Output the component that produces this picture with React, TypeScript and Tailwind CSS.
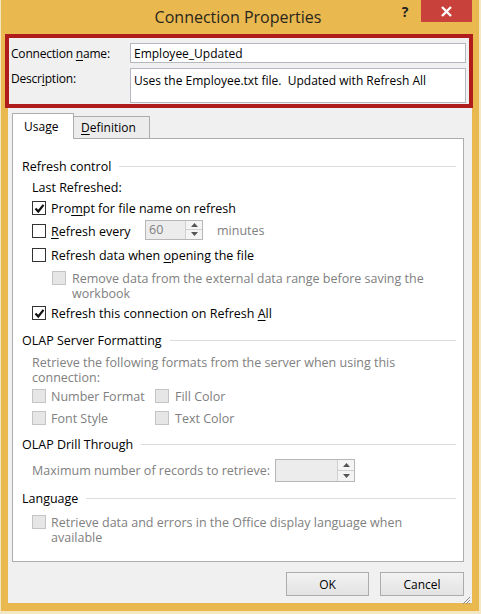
import React from "react";

const FONT = "font-['Open_Sans','Noto_Sans',sans-serif]";

function U({ children }: { children: React.ReactNode }) {
  return <span className="underline underline-offset-2">{children}</span>;
}

function Box({ checked, disabled }: { checked?: boolean; disabled?: boolean }) {
  return (
    <div
      className={`w-[14px] h-[14px] shrink-0 border flex items-center justify-center ${
        disabled ? "border-[#c4c4c4] bg-[#e6e6e6]" : "border-[#333333] bg-white"
      }`}
    >
      {checked && (
        <svg width="11" height="11" viewBox="0 0 11 11">
          <path d="M1.5 5.5 L4.3 8.5 L9.5 1.8" fill="none" stroke="#111" strokeWidth="2.2" />
        </svg>
      )}
    </div>
  );
}

function Heading({ label }: { label: string }) {
  return (
    <div className="flex items-center h-full">
      <span className="text-black whitespace-nowrap">{label}</span>
      <div className="flex-1 h-px bg-[#dcdcdc] ml-[8px]" />
    </div>
  );
}

// two wrapped lines, 15px apart like the dialog's wrapped labels
function Lines({ a, b }: { a: string; b: string }) {
  return (
    <div className="flex flex-col text-[#808080]">
      <div className="h-[15px] leading-[15px] whitespace-nowrap">{a}</div>
      <div className="h-[15px] leading-[15px] whitespace-nowrap">{b}</div>
    </div>
  );
}

function Spin({ w, value }: { w: string; value?: string }) {
  return (
    <div className={`${w} h-full flex border border-[#b7b7b7] bg-[#ececec]`}>
      <div className="flex-1 pl-[3px] flex items-center text-[#808080]">{value}</div>
      <div className="w-[17px] flex flex-col border-l border-[#d0d0d0] bg-[#f4f4f4]">
        <div className="flex-1 flex items-center justify-center border-b border-[#d0d0d0]">
          <svg width="7" height="4" viewBox="0 0 7 4">
            <path d="M0 4 L3.5 0 L7 4Z" fill="#555" />
          </svg>
        </div>
        <div className="flex-1 flex items-center justify-center">
          <svg width="7" height="4" viewBox="0 0 7 4">
            <path d="M0 0 L3.5 4 L7 0Z" fill="#555" />
          </svg>
        </div>
      </div>
    </div>
  );
}

export default function App() {
  return (
    <div className={`w-[481px] h-[614px] ${FONT} text-[12px] leading-[15px] text-black bg-[#f6e7c3]`}>
      <div className="w-[478px] h-[611px] ml-px bg-[#e9b84f] flex flex-col">
        {/* Title bar */}
        <div className="h-[34px] flex relative">
          <div className="flex-1 flex items-center justify-center pt-[1px] pr-[4px] text-[16px] text-[#2a261d]">
            Connection Properties
          </div>
          <div className="absolute right-[7px] top-0 flex">
            <div className="w-[16px] h-[22px] mr-[8px] flex items-center justify-center font-bold text-[14px] text-[#222]">
              ?
            </div>
            <div className="w-[51px] h-[22px] bg-[#c8423b] flex items-center justify-center">
              <svg width="11" height="11" viewBox="0 0 11 11">
                <path d="M1 1 L10 10 M10 1 L1 10" stroke="#fff" strokeWidth="2.4" />
              </svg>
            </div>
          </div>
        </div>

        {/* Body */}
        <div className="flex-1 mx-[7px] mb-[8px] bg-[#f0f0f0] flex flex-col">
          {/* Annotated header fields */}
          <div className="ml-[-3px] mr-[-1px] h-[74px] border-[4px] border-[#b01c1c] flex flex-col pl-[2px] pr-[3px] pt-[5px]">
            <div className="flex h-[20px]">
              <div className="w-[119px] flex items-center tracking-[-0.2px]">
                <span>
                  Connection <U>n</U>ame:
                </span>
              </div>
              <div className="flex-1 border border-[#b5b8c0] bg-white flex items-center pl-[3px]">
                Employee_Updated
              </div>
            </div>
            <div className="flex h-[35px] mt-[5px]">
              <div className="w-[119px] pt-[3px] tracking-[-0.2px]">
                Descr<U>i</U>ption:
              </div>
              <div className="flex-1 border border-[#b5b8c0] bg-white pl-[3px] pt-[4px]">
                Uses the Employee.txt file.&nbsp; Updated with Refresh All
              </div>
            </div>
          </div>

          {/* Tabs */}
          <div className="flex items-end ml-[4px] mt-[5px] h-[25px]">
            <div className="w-[62px] h-[26px] bg-white border border-b-0 border-[#adadad] flex items-center pl-[11px] z-10 relative top-px">
              <span>
                Usa<U>g</U>e
              </span>
            </div>
            <div className="w-[76px] h-[22px] bg-[#ececec] border border-l-0 border-b-0 border-[#adadad] flex items-center pl-[7px]">
              <span>
                <U>D</U>efinition
              </span>
            </div>
          </div>

          {/* Panel */}
          <div className="ml-[4px] mr-[8px] h-[424px] bg-white border border-[#adadad] flex flex-col pl-[9px] pr-[7px] pt-[16px] text-[12.5px]">
            <div className="h-[22px]">
              <Heading label="Refresh control" />
            </div>
            <div className="h-[20px] pl-[10px] flex items-center">Last Refreshed:</div>
            <div className="h-[22px] pl-[10px] flex items-center gap-[5px]">
              <Box checked />
              <span>
                Pro<U>m</U>pt for file name on refresh
              </span>
            </div>
            <div className="h-[24px] pl-[10px] flex items-center gap-[5px]">
              <Box />
              <span className="w-[89px]">
                <U>R</U>efresh every
              </span>
              <div className="h-[20px] mb-[3px]">
                <Spin w="w-[58px]" value="60" />
              </div>
              <span className="ml-[9px] mb-[2px] text-[#808080]">minutes</span>
            </div>
            <div className="h-[24px] pl-[10px] flex items-center gap-[5px]">
              <Box />
              <span>
                Refresh data when <U>o</U>pening the file
              </span>
            </div>
            <div className="h-[34px] pl-[30px] pt-[4px] flex items-start gap-[6px]">
              <Box disabled />
              <Lines a="Remove data from the external data range before saving the" b="workbook" />
            </div>
            <div className="h-[24px] pl-[10px] flex items-center gap-[5px]">
              <Box checked />
              <span>
                Refresh this connection on Refresh <U>A</U>ll
              </span>
            </div>
            <div className="h-[30px]">
              <Heading label="OLAP Server Formatting" />
            </div>
            <div className="h-[30px] pl-[10px]">
              <Lines a="Retrieve the following formats from the server when using this" b="connection:" />
            </div>
            <div className="h-[22px] pl-[10px] flex items-center">
              <div className="w-[123px] flex items-center gap-[5px]">
                <Box disabled />
                <span className="text-[#808080]">Number Format</span>
              </div>
              <div className="flex items-center gap-[6px]">
                <Box disabled />
                <span className="text-[#808080]">Fill Color</span>
              </div>
            </div>
            <div className="h-[22px] pl-[10px] flex items-center">
              <div className="w-[123px] flex items-center gap-[5px]">
                <Box disabled />
                <span className="text-[#808080]">Font Style</span>
              </div>
              <div className="flex items-center gap-[6px]">
                <Box disabled />
                <span className="text-[#808080]">Text Color</span>
              </div>
            </div>
            <div className="h-[30px]">
              <Heading label="OLAP Drill Through" />
            </div>
            <div className="h-[22px] pl-[10px] flex items-center">
              <span className="w-[243px] text-[#808080]">Maximum number of records to retrieve:</span>
              <div className="h-[23px]">
                <Spin w="w-[80px]" />
              </div>
            </div>
            <div className="h-[34px]">
              <Heading label="Language" />
            </div>
            <div className="h-[30px] pl-[10px] flex items-start gap-[5px]">
              <Box disabled />
              <Lines a="Retrieve data and errors in the Office display language when" b="available" />
            </div>
          </div>

          {/* Buttons */}
          <div className="flex justify-end gap-[11px] mr-[8px] mt-[10px] relative">
            <button className="w-[83px] h-[24px] border border-[#acacac] bg-gradient-to-b from-[#f2f2f2] to-[#e3e3e3] text-black">
              OK
            </button>
            <button className="w-[84px] h-[24px] border border-[#acacac] bg-gradient-to-b from-[#f2f2f2] to-[#e3e3e3] text-black">
              Cancel
            </button>
            <svg className="absolute right-[-7px] bottom-[-9px]" width="9" height="9" viewBox="0 0 9 9">
              <path d="M8 1 L1 8 M8 4 L4 8 M8 7 L7 8" stroke="#8c8c8c" strokeWidth="1" />
            </svg>
          </div>
        </div>
      </div>
    </div>
  );
}
